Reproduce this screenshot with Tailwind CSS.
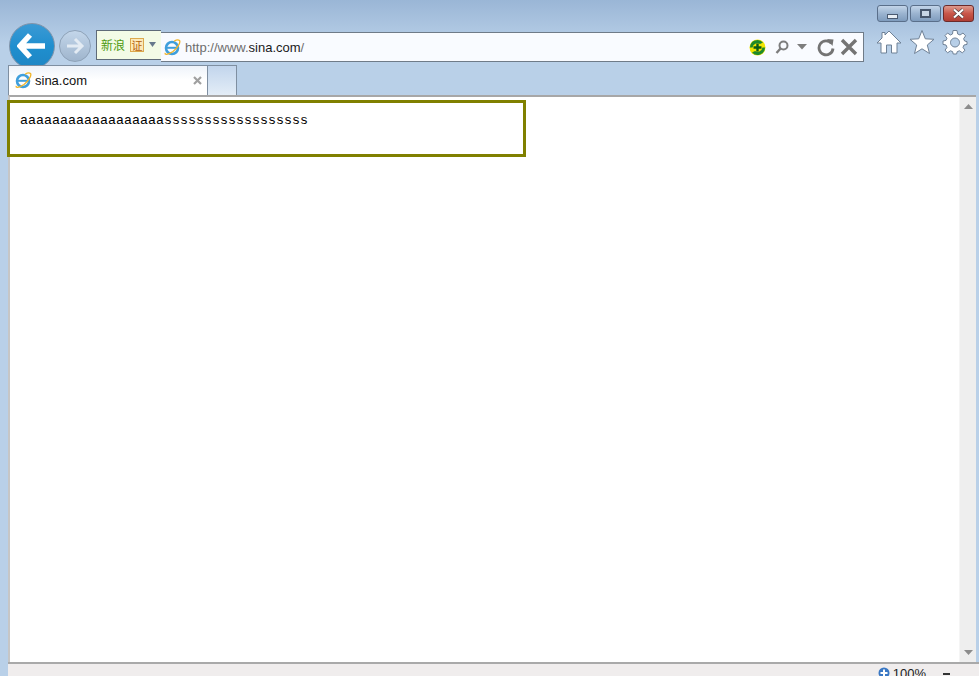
<!DOCTYPE html>
<html><head><meta charset="utf-8"><script src="https://cdn.jsdelivr.net/npm/@tailwindcss/browser@4"></script></head>
<body class="m-0 overflow-hidden">
<div class="w-[979px] h-[676px] flex flex-col overflow-hidden bg-[#b9d0e8] bg-gradient-to-b from-[#9ab6d6] via-[#b9d0e8] via-[45px] to-[#b9d0e8] font-['Liberation_Sans',sans-serif] relative">
  <!-- window buttons -->
  <div class="h-[23px] flex justify-end pt-[5px] pr-[5px] gap-[2px]">
    <div class="w-[31px] h-[17px] rounded-[3px] border border-[#5a6f8a] bg-gradient-to-b from-[#c3d5e9] via-[#9bb4d0] to-[#7f9cbd] flex items-end justify-center pb-[2px]"><div class="w-[11px] h-[5px] bg-[#e8eef5] border border-[#4a5a70]"></div></div>
    <div class="w-[31px] h-[17px] rounded-[3px] border border-[#5a6f8a] bg-gradient-to-b from-[#c3d5e9] via-[#9bb4d0] to-[#7f9cbd] flex items-center justify-center"><div class="w-[11px] h-[9px] border-[2px] border-[#46566c] bg-[#c7d6e6]"></div></div>
    <div class="w-[31px] h-[17px] rounded-[3px] border border-[#6b2a2a] bg-gradient-to-b from-[#dd9a8e] via-[#c9574a] to-[#b03e34] flex items-center justify-center">
      <svg width="13" height="11" viewBox="0 0 13 11"><path d="M2 1.5 L11 9.5 M11 1.5 L2 9.5" stroke="#4a3a3a" stroke-width="3.4"/><path d="M2 1.5 L11 9.5 M11 1.5 L2 9.5" stroke="#fff" stroke-width="2.2"/></svg>
    </div>
  </div>
  <!-- navigation row -->
  <div class="h-[46px] flex items-start pl-[9px] relative z-10">
    <div class="w-[46px] h-[46px] rounded-full border-[1.5px] border-[#7f93aa] bg-gradient-to-b from-[#3a9ad4] via-[#1f8fcf] via-50% to-[#1f86c4] flex items-center justify-center shrink-0">
      <svg width="30" height="26" viewBox="0 0 30 26"><path d="M13 2 L3 13 L13 24 M4 13 H28" fill="none" stroke="#fff" stroke-width="5.5"/></svg>
    </div>
    <div class="w-[32px] h-[32px] mt-[7px] ml-[4px] rounded-full border border-[#8ea2b8] bg-gradient-to-b from-[#c3d6ea] to-[#9fb5cd] flex items-center justify-center shrink-0">
      <svg width="20" height="18" viewBox="0 0 20 18"><path d="M10 2 L17 9 L10 16 M17 9 H2" fill="none" stroke="#e3ebf3" stroke-width="3"/></svg>
    </div>
    <div class="w-[65px] h-[30px] mt-[7px] ml-[5px] border border-[#5f6b78] border-r-0 bg-[#f3fbe6] flex items-center pl-[4px] shrink-0">
      <span class="text-[12px] text-[#4d9a10] font-['Noto_Sans_CJK_SC',sans-serif] leading-none">新浪</span>
      <span class="ml-[5px] w-[14px] h-[14px] border border-[#dca94d] bg-[#fce9b8] text-[#b5600c] text-[11px] leading-[12px] text-center font-['Noto_Sans_CJK_SC',sans-serif]">证</span>
      <svg class="ml-[5px]" width="7" height="6" viewBox="0 0 7 6"><path d="M0 0 H7 L3.5 5 Z" fill="#66788c"/></svg>
    </div>
    <div class="w-[703px] h-[30px] mt-[9px] border border-[#6f7b88] border-l-0 bg-[#f9fbff] flex items-center shrink-0">
      <svg class="ml-[3px]" width="17" height="17" viewBox="0 0 17 17"><circle cx="8" cy="9" r="6" fill="none" stroke="#3f9fdc" stroke-width="2.6"/><path d="M3 8.8 H13" stroke="#3f9fdc" stroke-width="2"/><path d="M1.5 14 C0 16 4 16 9 12.5 C13 9.5 17 3.5 15.5 1.5 C14.5 0.5 12 1 10 2.2" fill="none" stroke="#f0b429" stroke-width="1.3"/></svg>
      <span class="ml-[4px] text-[13px] text-[#6d6d6d] leading-none">http://www.<span class="text-[#1a1a1a]">sina.com</span>/</span>
      <div class="ml-auto flex items-center pr-[5px]">
        <svg width="17" height="17" viewBox="0 0 17 17"><circle cx="8.5" cy="8.5" r="8" fill="#f2e600"/><path d="M1 8.5 A7.5 7.5 0 0 1 14 3.5 L11 5 A5 5 0 0 0 3.5 8.5 Z M16 8.5 A7.5 7.5 0 0 1 3 13.5 L6 12 A5 5 0 0 0 13.5 8.5 Z" fill="#1f8a2a"/><path d="M8.5 4.5 V12.5 M4.5 8.5 H12.5" stroke="#0b5d16" stroke-width="2.4"/></svg>
        <svg class="ml-[9px]" width="14" height="15" viewBox="0 0 14 15"><circle cx="8.5" cy="5.5" r="4" fill="none" stroke="#7d7d7d" stroke-width="2"/><path d="M5.5 8.5 L1.5 13" stroke="#7d7d7d" stroke-width="2.4"/></svg>
        <svg class="ml-[8px]" width="10" height="6" viewBox="0 0 10 6"><path d="M0 0 H10 L5 5.5 Z" fill="#7d7d7d"/></svg>
        <svg class="ml-[10px]" width="18" height="19" viewBox="0 0 18 19"><path d="M14.5 5.5 A7 7 0 1 0 16 10.5" fill="none" stroke="#747474" stroke-width="2.8"/><path d="M10 1 L16.5 1.5 L15.5 8 Z" fill="#747474"/></svg>
        <svg class="ml-[5px]" width="18" height="18" viewBox="0 0 18 18"><path d="M2 2 L16 16 M16 2 L2 16" stroke="#747474" stroke-width="3.4"/></svg>
      </div>
    </div>
    <div class="flex items-center gap-[7px] ml-[12px] mt-[6px] shrink-0">
      <svg width="26" height="26" viewBox="0 0 26 26"><path d="M13 2 L25 14 H21 V24 H15.5 V16 H10.5 V24 H5 V14 H1 L6 9 V3.5 H9 V6 Z" fill="#fff" stroke="#6f8196" stroke-width="1"/></svg>
      <svg width="26" height="26" viewBox="0 0 26 26"><path d="M13 1.5 L16.3 9.8 L25 10.3 L18.3 16 L20.5 24.5 L13 19.8 L5.5 24.5 L7.7 16 L1 10.3 L9.7 9.8 Z" fill="#fff" stroke="#6f8196" stroke-width="1"/></svg>
      <svg width="26" height="26" viewBox="0 0 26 26"><path d="M11 1.5 H15 L15.7 5 L18 6 L21 4 L23.6 6.8 L21.6 9.7 L22.6 12 L25 12.6 V15.4 L22 16 L21 18.4 L23 21.3 L20.3 23.8 L17.4 21.8 L15.2 22.7 L14.6 25 H11.2 L10.6 22.6 L8.4 21.8 L5.7 23.8 L3 21.2 L5 18.4 L4 16 L1 15.4 V12 L4 11.4 L5 9.2 L3 6.6 L5.6 4 L8.4 6 L10.5 5 Z M13 9 A4.5 4.5 0 1 0 13.01 9 Z" fill="#fff" fill-rule="evenodd" stroke="#6f8196" stroke-width="1"/></svg>
    </div>
  </div>
  <!-- tabs -->
  <div class="h-[26px] -mt-[4px] pt-0 flex pl-[8px] relative z-20 shrink-0 h-[30px]">
    <div class="w-[200px] h-[30px] border border-[#7f8fa1] border-b-0 bg-gradient-to-b from-[#eef3fa] via-white to-white flex items-center pl-[6px]">
      <svg width="17" height="17" viewBox="0 0 17 17"><circle cx="8" cy="9" r="6" fill="none" stroke="#3f9fdc" stroke-width="2.6"/><path d="M3 8.8 H13" stroke="#3f9fdc" stroke-width="2"/><path d="M1.5 14 C0 16 4 16 9 12.5 C13 9.5 17 3.5 15.5 1.5 C14.5 0.5 12 1 10 2.2" fill="none" stroke="#f0b429" stroke-width="1.3"/></svg>
      <span class="ml-[3px] text-[13px] text-[#111] leading-none">sina.com</span>
      <svg class="ml-auto mr-[5px]" width="9" height="9" viewBox="0 0 9 9"><path d="M1 1 L8 8 M8 1 L1 8" stroke="#a0a0a0" stroke-width="2.2"/></svg>
    </div>
    <div class="w-[29px] h-[30px] border border-[#7f8fa1] border-l-0 border-b-0 bg-gradient-to-b from-[#c2d5ec] to-[#e3edf7]"></div>
  </div>
  <!-- page area -->
  <div class="flex-1 min-h-0 flex flex-col">
    <div class="flex-1 min-h-0 ml-[8px] mr-[3px] border-t-[2px] border-t-[#a7a7a7] border-l-[2px] border-l-[#c6c6c6] bg-white flex">
      <div class="flex-1 relative">
        <div class="w-[519px] h-[57px] mt-[3px] -ml-[3px] border-[3px] border-[#808000] bg-white pl-[10px] pt-[10px] font-['Liberation_Mono',monospace] text-[13.33px] leading-[16px] text-black relative">aaaaaaaaaaaaaaaaaassssssssssssssssss</div>
      </div>
      <div class="w-[17px] bg-[#eeeeee] flex flex-col items-center justify-between py-[7px] border-l border-[#f5f5f5]">
        <svg width="9" height="5" viewBox="0 0 9 5"><path d="M0 5 L4.5 0 L9 5 Z" fill="#8c8c8c"/></svg>
        <svg width="9" height="5" viewBox="0 0 9 5"><path d="M0 0 L4.5 5 L9 0 Z" fill="#8c8c8c"/></svg>
      </div>
    </div>
    <div class="h-[14px] ml-[8px] border-t-[2px] border-t-[#a9a9a9] bg-[#f0eded] flex items-start justify-end pr-[29px] overflow-hidden shrink-0">
      <svg class="mt-[3px]" width="12" height="12" viewBox="0 0 12 12"><circle cx="6" cy="6" r="5.5" fill="#3a78c4"/><path d="M6 2.5 V9.5 M2.5 6 H9.5" stroke="#fff" stroke-width="2"/></svg>
      <span class="ml-[3px] mt-[2px] text-[13px] leading-[15px] text-[#222]">100%</span>
      <div class="ml-[17px] mt-[9px] w-[7px] h-[2px] bg-[#333]"></div>
    </div>
  </div>
</div>
</body></html>
